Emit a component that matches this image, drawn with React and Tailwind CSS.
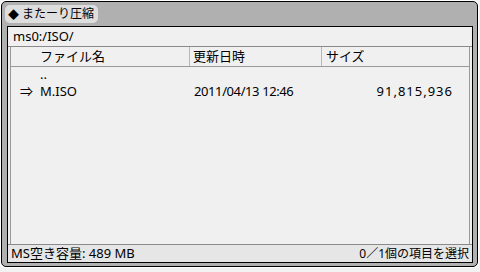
const rows = [
    { mark: '', name: '..', date: '', size: '' },
    { mark: '⇒', name: 'M.ISO', date: '2011/04/13 12:46', size: '91,815,936' },
];

export default function App() {
    return (
        <div
            className="w-[480px] h-[272px] bg-[#f2f2f2] overflow-hidden relative text-black"
            style={{ fontFamily: '"Noto Sans", "Noto Sans CJK JP", sans-serif' }}
        >
            {/* outer frame */}
            <div className="absolute left-[1px] top-[1px] w-[477px] h-[266px] bg-[#b0b0b0] border border-black rounded-[5px] shadow-[0_0_0_1px_#ffffff] flex flex-col">
                <div className="h-[24px] flex items-start pl-[3px] pt-[3px]">
                    <div className="h-[18px] pl-[3px] pr-[4px] rounded-[5px] bg-[#dedede] flex items-center gap-[3px] text-[12px] leading-none">
                        <span className="text-[11px]">◆</span>
                        <span>またーり圧縮</span>
                    </div>
                </div>

                {/* inner panel */}
                <div className="ml-[5px] w-[466px] h-[237px] border border-black bg-[#f0f0f0] flex flex-col">
                    <div className="h-[20px] border-b border-[#8a8a8a] flex items-center pl-[5px] text-[13px] leading-none">
                        ms0:/ISO/
                    </div>

                    <div className="flex-1 mx-[2px] border-x border-[#9a9a9a] flex flex-col">
                        <div className="h-[20px] border-b border-[#9a9a9a] flex text-[13px] leading-none">
                            <div className="w-[179px] border-r border-[#b8b8b8] flex items-center pl-[29px]">ファイル名</div>
                            <div className="w-[132px] border-r border-[#b8b8b8] flex items-center pl-[3px]">更新日時</div>
                            <div className="flex-1 flex items-center pl-[4px]">サイズ</div>
                        </div>
                        <div className="flex flex-col -mt-[1px] text-[13px] leading-none">
                            {rows.map((r, i) => (
                                <div key={i} className="h-[17px] flex items-center">
                                    <div className="w-[29px] pl-[9px]">{r.mark}</div>
                                    <div className="w-[151px]">{r.name}</div>
                                    <div className="w-[130px] pl-[3px] tracking-[-0.4px]">{r.date}</div>
                                    <div className="w-[132px] text-right tracking-[1px]">{r.size}</div>
                                </div>
                            ))}
                        </div>
                    </div>

                    <div className="h-[18px] border-t border-[#8a8a8a] bg-[#e6e6e6] flex items-center justify-between px-[3px] text-[12px] leading-none">
                        <span className="text-[13px]">MS空き容量: 489 MB</span>
                        <span>0／1個の項目を選択</span>
                    </div>
                </div>
            </div>
        </div>
    );
}
